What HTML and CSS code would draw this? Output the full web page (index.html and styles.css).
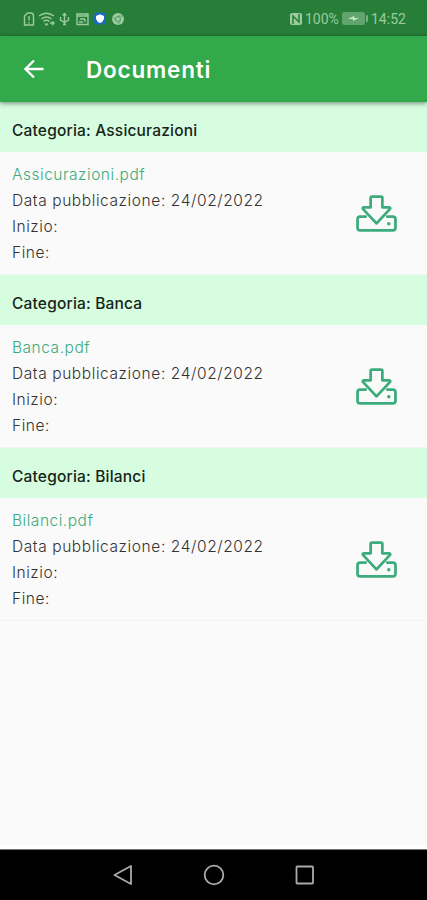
FILE: index.html
```html
<!DOCTYPE html>
<html lang="it">
<head>
<meta charset="utf-8">
<title>Documenti</title>
<link rel="stylesheet" href="styles.css">
</head>
<body>
<svg class="defs" width="0" height="0" aria-hidden="true">
  <symbol id="download" viewBox="0 0 40 38">
    <path d="M9.5 21H4Q1.5 21 1.5 23.5V32Q1.5 34.5 4 34.5H36Q38.500 34.500 38.500 32V23.500Q38.500 21 36 21H30.500" />
    <path d="M15.500 1.500H24.500Q25.700 1.500 25.700 2.700V12H32.500Q34 12.500 33 13.800L20.500 27.200Q20 27.700 19.500 27.200L7 13.800Q6 12.500 7.500 12H14.300V2.700Q14.300 1.500 15.500 1.500Z" />
    <circle class="dot" cx="32" cy="28" r="1.7" />
  </symbol>
</svg>
<div class="screen">
  <div class="status">
    <svg class="status-left" width="104" height="16" viewBox="0 0 104 16" fill="none" stroke="currentColor" stroke-width="1.400">
      <path d="M2.500 14V5L5.500 2H8.500Q11.500 2 11.500 5V14ZM7 5V9.500M7 11V12.500" />
      <path d="M17 5Q24.500-.5 32 5M19.500 8Q24.500 4 29.500 8M21.500 10.500Q24.500 8 27.500 10.500M23 12.500L24.500 14L26 12.500M28 12H32M30 10.500L32 12L30 14" />
      <path d="M42.500 14V3M40.800 4.500L42.500 2.500L44.200 4.500M38.500 6V9L42.500 11.500L46.500 9V6M41 13.500H44" />
      <path d="M55 3H66V13.500H55ZM55 5H66M58 8H63M63 8V11M57 11H61" />
      <rect x="72" y="1.500" width="12" height="12" rx="4" fill="#1769c5" stroke="none" />
      <path d="M74 5L78 3.200L82 5V8Q81 11 78 12Q75 11 74 8Z" fill="#fff" stroke="none" />
      <circle cx="96" cy="8" r="6" fill="currentColor" stroke="none" />
      <path d="M96 5H101M93.500 9.500L91 6M98.500 9.500L96 13.500" stroke="#4f9b60" stroke-width=".8" />
      <circle cx="96" cy="8" r="2.500" stroke="#4f9b60" stroke-width="1" />
    </svg>
    <div class="status-right">
      <svg width="14" height="14" viewBox="0 0 14 14">
        <path d="M1 2L3 1H11Q13 1 13 3V12L11 13H3Q1 13 1 11Z" fill="currentColor" />
        <path d="M4 12V4L10 10V2" fill="none" stroke="#277e38" stroke-width="1.500" />
      </svg>
      <span class="percent">100%</span>
      <svg class="battery" width="26" height="13" viewBox="0 0 26 13">
        <rect x="0" y="0" width="23" height="13" rx="2.500" fill="#62a46d" />
        <rect x="24" y="3" width="1.800" height="7" rx=".9" fill="#82b989" />
        <path d="M6 7L12 4L12.500 6H17L11 9V7Z" fill="#cae6ca" />
      </svg>
      <span class="clock">14:52</span>
    </div>
  </div>
  <header class="bar">
    <svg width="20" height="20" viewBox="0 0 20 20" fill="none" stroke="#fff" stroke-width="2.300"><path d="M19.500 10H2M10 1.500L1.500 10L10 18.500" /></svg>
    <h1>Documenti</h1>
  </header>
  <main>
    <section>
      <h2>Categoria: Assicurazioni</h2>
      <div class="item">
        <div class="info"><a>Assicurazioni.pdf</a><p class="date">Data pubblicazione: 24/02/2022</p><p>Inizio:</p><p>Fine:</p></div>
        <svg class="download"><use href="#download" /></svg>
      </div>
    </section>
    <section>
      <h2>Categoria: Banca</h2>
      <div class="item">
        <div class="info"><a>Banca.pdf</a><p class="date">Data pubblicazione: 24/02/2022</p><p>Inizio:</p><p>Fine:</p></div>
        <svg class="download"><use href="#download" /></svg>
      </div>
    </section>
    <section>
      <h2>Categoria: Bilanci</h2>
      <div class="item">
        <div class="info"><a>Bilanci.pdf</a><p class="date">Data pubblicazione: 24/02/2022</p><p>Inizio:</p><p>Fine:</p></div>
        <svg class="download"><use href="#download" /></svg>
      </div>
    </section>
  </main>
  <nav class="nav">
    <svg width="22" height="22" viewBox="0 0 22 22"><path d="M19 2V20L2.500 11Z" /></svg>
    <svg width="22" height="22" viewBox="0 0 22 22"><circle cx="11" cy="11" r="9.300" /></svg>
    <svg width="22" height="22" viewBox="0 0 22 22"><rect x="2.500" y="2.500" width="16.500" height="17" rx=".7" /></svg>
  </nav>
</div>
</body>
</html>
```
FILE: styles.css
```css
* { box-sizing: border-box; }
body, h1, h2, p { margin: 0; }
body { background: #fafafa; font-family: Inter, Roboto, sans-serif; overflow: hidden; }
.defs { display: block; }
.screen { width: 427px; height: 900px; display: flex; flex-direction: column; }
.status {
  height: 36px; flex: none; background: #277e38; color: #9bcb9f;
  display: flex; align-items: center; justify-content: space-between;
  padding: 1px 21px 0 22px;
}
.status-right { display: flex; align-items: center; font: 14px/16px Roboto, sans-serif; }
.percent { margin-left: 2px; width: 35px; }
.battery { margin: 0 3px 0 2px; }
.clock { width: 35px; }
.bar {
  height: 66px; flex: none; background: #32a94a; color: #fff;
  display: flex; align-items: center; padding-left: 24px; gap: 42px;
  box-shadow: 0 1px 5px rgba(0, 0, 0, .5); z-index: 1;
}
h1 { font-size: 22.5px; line-height: 28px; font-weight: 600; letter-spacing: .8px; padding-top: 1px; }
main { flex: 1; border-bottom: 4px solid #fff; }
h2 {
  height: 50px; padding: 16px 12px 0; background: #d6fddf; color: #172319;
  font-size: 15.5px; line-height: 26px; font-weight: 500; letter-spacing: .19px;
}
.item {
  height: 123px; display: flex; justify-content: space-between;
  padding: 9px 30px 0 12px; border-bottom: 1px solid #f2f2f2;
}
.info {
  padding-top: 1px; font-size: 15.5px; line-height: 26px; font-weight: 300;
  letter-spacing: .52px; color: #333; white-space: nowrap;
}
.date { letter-spacing: .59px; }
.info a { display: block; color: #3bab7c; }
.download {
  width: 41px; height: 39px; margin-top: 34px; fill: none;
  stroke: #3cac7c; stroke-width: 2.7; stroke-linejoin: round; stroke-linecap: round;
}
.dot { fill: #3cac7c; stroke: none; }
.nav {
  height: 51px; flex: none; background: #000; border-top: 1px solid #777;
  display: flex; justify-content: center; gap: 69px;
  padding-top: 14px; fill: none; stroke: #aaa; stroke-width: 1.8; stroke-linejoin: round;
}
```
